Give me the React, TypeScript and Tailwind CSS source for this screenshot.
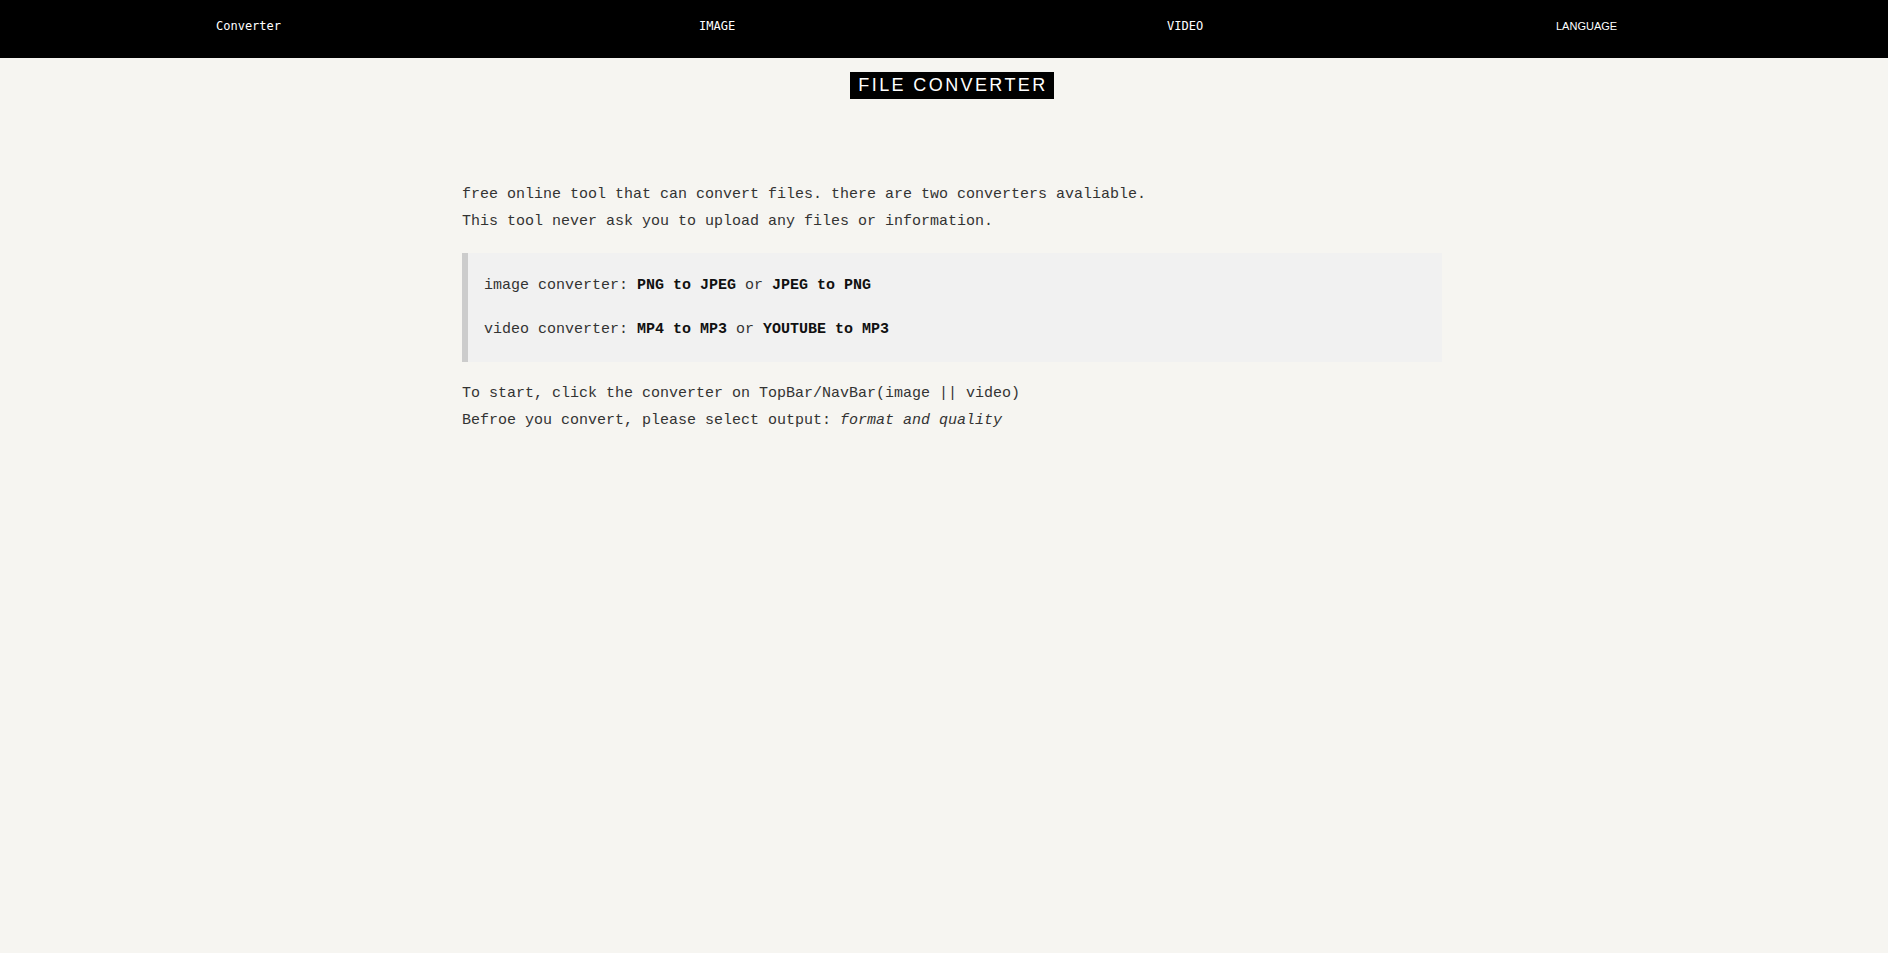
import React from "react";

const mono = "font-['Liberation_Mono','DejaVu_Sans_Mono',monospace]";

const App: React.FC = () => {
  return (
    <div className="min-h-screen bg-[#f6f5f1]">
      {/* Top bar */}
      <nav className="h-[58px] bg-black pl-[216px] grid grid-cols-[483px_468px_389px_auto] items-start pt-[18px] text-white">
        <a className="font-['DejaVu_Sans_Mono',monospace] text-[12px] leading-[16px]">Converter</a>
        <a className="font-['DejaVu_Sans_Mono',monospace] text-[12px] leading-[16px]">IMAGE</a>
        <a className="font-['DejaVu_Sans_Mono',monospace] text-[12px] leading-[16px]">VIDEO</a>
        <a className="font-['Liberation_Sans',Arial,sans-serif] text-[11px] leading-[16px]">LANGUAGE</a>
      </nav>

      <main className="pl-4">
        <div className="flex justify-center pt-[14px]">
          <h1 className="bg-black text-white h-[27px] pl-2 pr-[6px] flex items-center font-['Liberation_Sans',sans-serif] text-[18px] tracking-[2.4px]">
            FILE CONVERTER
          </h1>
        </div>

        <div className={`w-[980px] mx-auto mt-[82px] text-[15px] leading-[27px] text-[#333] ${mono}`}>
          <p>
            free online tool that can convert files. there are two converters avaliable.
            <br />
            This tool never ask you to upload any files or information.
          </p>

          <blockquote className="my-[18px] bg-[#f1f1f1] border-l-[6px] border-[#cccccc] pl-[16px] py-[19px] flex flex-col gap-[17px]">
            <p>
              image converter: <b className="text-[#111]">PNG to JPEG</b> or{" "}
              <b className="text-[#111]">JPEG to PNG</b>
            </p>
            <p>
              video converter: <b className="text-[#111]">MP4 to MP3</b> or{" "}
              <b className="text-[#111]">YOUTUBE to MP3</b>
            </p>
          </blockquote>

          <p>
            To start, click the converter on TopBar/NavBar(image || video)
            <br />
            Befroe you convert, please select output: <i>format and quality</i>
          </p>
        </div>
      </main>
    </div>
  );
};

export default App;
